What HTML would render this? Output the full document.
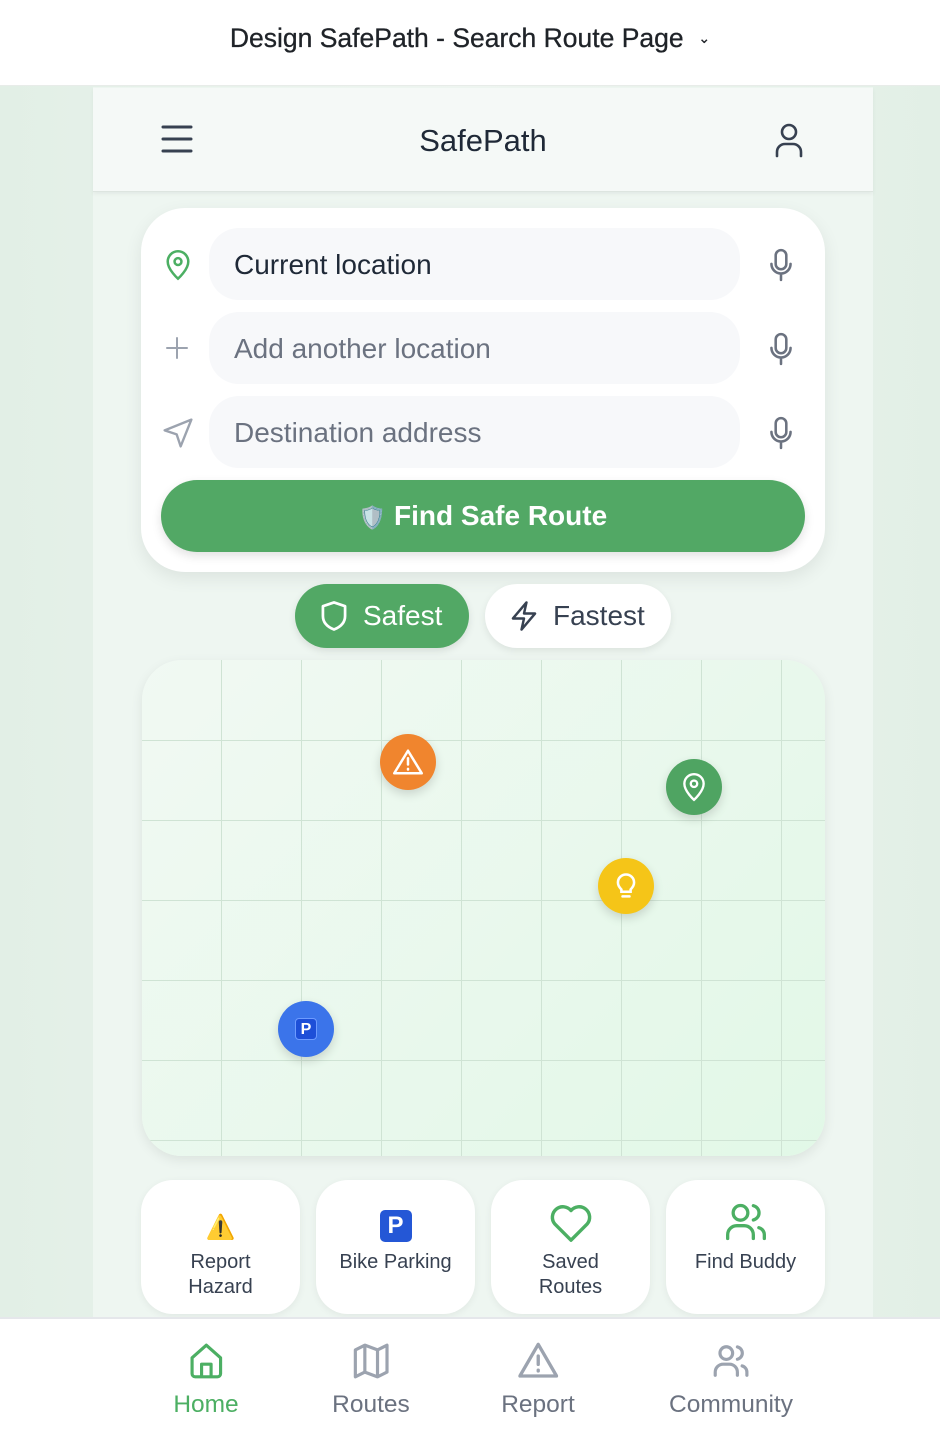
<!DOCTYPE html>
<html><head><meta charset="utf-8"><style>
*{box-sizing:border-box;margin:0;padding:0}
body{width:940px;height:1434px;overflow:hidden;font-family:"Liberation Sans",Helvetica,Arial,sans-serif;background:linear-gradient(90deg,#e2efe6,#eef5f0 50%,#e2efe6);position:relative}
.top{position:absolute;left:0;top:0;width:940px;height:86px;background:#fff;border-bottom:1px solid #e8ece9;text-align:center;font-size:26.5px;color:#1f2328;line-height:76px;-webkit-text-stroke:0.3px #1f2328}
.app{position:absolute;left:93px;top:87px;width:780px;height:1240px;background:#eef6f1}
.hdr{position:absolute;left:93px;top:88px;width:780px;height:104px;background:#f5f9f7;border-bottom:1px solid #dde5e0;box-shadow:0 2px 4px rgba(0,0,0,.05)}
.hdr .t{position:absolute;left:0;width:100%;text-align:center;top:35px;font-size:31px;color:#1f2937}
.card{position:absolute;left:141px;top:208px;width:684px;height:364px;background:#fff;border-radius:44px;box-shadow:0 6px 18px rgba(0,0,0,.08)}
.inp{position:absolute;left:209px;width:531px;height:72px;background:#f7f8fa;border-radius:30px;font-size:28px;line-height:74px;padding-left:25px;color:#6b7280}
.btn{position:absolute;left:161px;top:480px;width:644px;height:72px;background:#52a865;border-radius:36px;color:#fff;font-size:28px;font-weight:bold;text-align:center;line-height:72px;box-shadow:0 4px 10px rgba(0,0,0,.12)}
.pill{position:absolute;top:584px;height:64px;border-radius:32px;font-size:28px;line-height:64px}
.map{position:absolute;left:142px;top:660px;width:683px;height:496px;border-radius:40px;overflow:hidden;background:linear-gradient(135deg,#f1f9f3,#e2f8e7);box-shadow:0 4px 12px rgba(0,0,0,.08)}
.mk{position:absolute;width:56px;height:56px;border-radius:50%;box-shadow:0 4px 10px rgba(0,0,0,.15);display:flex;align-items:center;justify-content:center}
.tile{position:absolute;top:1180px;width:159px;height:134px;background:#fff;border-radius:32px;box-shadow:0 2px 8px rgba(0,0,0,.06);text-align:center;font-size:20px;color:#374151;line-height:25px}
.tile .ic{height:70px;display:flex;align-items:flex-end;justify-content:center;padding-bottom:8px}
.nav{position:absolute;left:0;top:1317px;width:940px;height:117px;background:#fff;border-top:2px solid #e5e7eb}
.ni{position:absolute;top:22px;text-align:center;font-size:24.5px;color:#6b7280;transform:translateX(-50%)}
.ni div{height:50px}
</style></head><body>
<div class="top">Design SafePath - Search Route Page &nbsp;<span style="font-size:14px;position:relative;top:-4px">&#8964;</span></div>
<div class="app"></div>
<div class="hdr">
 <svg style="position:absolute;left:68px;top:36px" width="32" height="30" viewBox="0 0 32 30" stroke="#374151" stroke-width="3" stroke-linecap="round"><path d="M2 3h28M2 15h28M2 27h28"/></svg>
 <div class="t">SafePath</div>
 <svg style="position:absolute;left:680px;top:34px" width="32" height="36" viewBox="0 0 32 36" fill="none" stroke="#374151" stroke-width="2.6" stroke-linecap="round"><circle cx="16" cy="10" r="7"/><path d="M4 34v-4a8 8 0 0 1 8-8h8a8 8 0 0 1 8 8v4"/></svg>
</div>
<div class="card"></div>
<svg style="position:absolute;left:164px;top:249px" width="28" height="32" viewBox="0 0 24 28" fill="none" stroke="#4caf63" stroke-width="2.2"><path d="M12 26s9-8 9-15a9 9 0 0 0-18 0c0 7 9 15 9 15z"/><circle cx="12" cy="11" r="3"/></svg>
<svg style="position:absolute;left:165px;top:336px" width="24" height="24" viewBox="0 0 24 24" stroke="#9ca3af" stroke-width="2" stroke-linecap="round"><path d="M12 2v20M2 12h20"/></svg>
<svg style="position:absolute;left:162px;top:417px" width="32" height="32" viewBox="0 0 24 24" fill="none" stroke="#9ca3af" stroke-width="1.8" stroke-linejoin="round"><path d="M22 2L2 10l9 3 3 9z"/></svg>
<div class="inp" style="top:228px;color:#1f2937">Current location</div>
<div class="inp" style="top:312px">Add another location</div>
<div class="inp" style="top:396px">Destination address</div>
<svg style="position:absolute;left:768px;top:248px" width="26" height="34" viewBox="0 0 24 32" fill="none" stroke="#6b7280" stroke-width="2.4" stroke-linecap="round"><rect x="7" y="2" width="10" height="18" rx="5"/><path d="M3 15a9 9 0 0 0 18 0M12 24v6"/></svg>
<svg style="position:absolute;left:768px;top:332px" width="26" height="34" viewBox="0 0 24 32" fill="none" stroke="#6b7280" stroke-width="2.4" stroke-linecap="round"><rect x="7" y="2" width="10" height="18" rx="5"/><path d="M3 15a9 9 0 0 0 18 0M12 24v6"/></svg>
<svg style="position:absolute;left:768px;top:416px" width="26" height="34" viewBox="0 0 24 32" fill="none" stroke="#6b7280" stroke-width="2.4" stroke-linecap="round"><rect x="7" y="2" width="10" height="18" rx="5"/><path d="M3 15a9 9 0 0 0 18 0M12 24v6"/></svg>
<div class="btn"><span style="font-size:22px">🛡️</span> Find Safe Route</div>
<div class="pill" style="left:295px;width:174px;background:#52a865;color:#fff;padding-left:68px;box-shadow:0 3px 8px rgba(0,0,0,.1)">Safest
 <svg style="position:absolute;left:24px;top:16px" width="30" height="32" viewBox="0 0 24 26" fill="none" stroke="#fff" stroke-width="2.2" stroke-linejoin="round"><path d="M12 2l9 3v8c0 6-4 9-9 11-5-2-9-5-9-11V5z"/></svg></div>
<div class="pill" style="left:485px;width:186px;background:#fff;color:#374151;padding-left:68px;box-shadow:0 3px 8px rgba(0,0,0,.08)">Fastest
 <svg style="position:absolute;left:24px;top:16px" width="30" height="32" viewBox="0 0 24 26" fill="none" stroke="#374151" stroke-width="2" stroke-linejoin="round"><path d="M14 2L3 15h9l-2 9 11-13h-9z"/></svg></div>
<div class="map">
 <svg width="683" height="496" style="position:absolute;left:0;top:0" stroke="#cfe3d4" stroke-width="1">
  <path d="M79.5 0v496M159.5 0v496M239.5 0v496M319.5 0v496M399.5 0v496M479.5 0v496M559.5 0v496M639.5 0v496M0 80.5h683M0 160.5h683M0 240.5h683M0 320.5h683M0 400.5h683M0 480.5h683"/>
 </svg>
 <div class="mk" style="left:238px;top:74px;background:#f0852e"><svg width="30" height="28" viewBox="0 0 24 22" fill="none" stroke="#fff" stroke-width="2" stroke-linecap="round" stroke-linejoin="round"><path d="M12 2L1 20h22z"/><path d="M12 8v5M12 16.5v.5"/></svg></div>
 <div class="mk" style="left:524px;top:99px;background:#4fa462"><svg width="26" height="30" viewBox="0 0 24 28" fill="none" stroke="#fff" stroke-width="2.2"><path d="M12 26s9-8 9-15a9 9 0 0 0-18 0c0 7 9 15 9 15z"/><circle cx="12" cy="11" r="3"/></svg></div>
 <div class="mk" style="left:456px;top:198px;background:#f5c518"><svg width="24" height="30" viewBox="0 0 20 26" fill="none" stroke="#fff" stroke-width="2.2" stroke-linecap="round"><path d="M6 16c-2-2-3-4-3-6a7 7 0 0 1 14 0c0 2-1 4-3 6v2H6zM7 22h6"/></svg></div>
 <div class="mk" style="left:136px;top:341px;background:#3b74ea"><div style="width:22px;height:22px;background:#1d4fd8;border-radius:4px;color:#fff;font-weight:bold;font-size:16px;line-height:22px;text-align:center;border:1px solid #6d9bff">P</div></div>
</div>
<div class="tile" style="left:141px"><div class="ic" style="padding-bottom:10px"><span style="font-size:24px;color:#f5c518">⚠️</span></div>Report<br>Hazard</div>
<div class="tile" style="left:316px"><div class="ic"><div style="width:32px;height:32px;background:#2457d6;border-radius:5px;color:#fff;font-weight:bold;font-size:24px;line-height:32px">P</div></div>Bike Parking</div>
<div class="tile" style="left:491px"><div class="ic" style="padding-bottom:6px"><svg width="46" height="42" viewBox="0 0 24 22" fill="none" stroke="#4caf63" stroke-width="1.8" stroke-linejoin="round"><path d="M12 20L3.5 11.5A5 5 0 0 1 12 4.5a5 5 0 0 1 8.5 7z"/></svg></div>Saved<br>Routes</div>
<div class="tile" style="left:666px"><div class="ic" style="padding-bottom:6px"><svg width="46" height="44" viewBox="0 0 24 24" fill="none" stroke="#4caf63" stroke-width="1.8" stroke-linecap="round"><circle cx="9" cy="7" r="4"/><path d="M2 21v-2a5 5 0 0 1 5-5h4a5 5 0 0 1 5 5v2M16 3.1a4 4 0 0 1 0 7.8M22 21v-2a4 4 0 0 0-3-3.9"/></svg></div>Find Buddy</div>
<div class="nav">
 <div class="ni" style="left:206px;color:#4caf63"><div><svg width="38" height="40" viewBox="0 0 24 24" fill="none" stroke="#4caf63" stroke-width="2" stroke-linejoin="round"><path d="M3 10l9-8 9 8v10a2 2 0 0 1-2 2H5a2 2 0 0 1-2-2z"/><path d="M9 22v-8h6v8"/></svg></div>Home</div>
 <div class="ni" style="left:371px"><div><svg width="38" height="40" viewBox="0 0 24 24" fill="none" stroke="#9ca3af" stroke-width="2" stroke-linejoin="round"><path d="M2 5l6-3 8 3 6-3v17l-6 3-8-3-6 3zM8 2v17M16 5v17"/></svg></div>Routes</div>
 <div class="ni" style="left:538px"><div><svg width="40" height="40" viewBox="0 0 24 24" fill="none" stroke="#9ca3af" stroke-width="2" stroke-linecap="round" stroke-linejoin="round"><path d="M12 2L1 21h22z"/><path d="M12 9v5M12 17.5v.5"/></svg></div>Report</div>
 <div class="ni" style="left:731px"><div><svg width="38" height="40" viewBox="0 0 24 24" fill="none" stroke="#9ca3af" stroke-width="2" stroke-linecap="round"><circle cx="9" cy="7" r="4"/><path d="M2 21v-2a5 5 0 0 1 5-5h4a5 5 0 0 1 5 5v2M16 3.1a4 4 0 0 1 0 7.8M22 21v-2a4 4 0 0 0-3-3.9"/></svg></div>Community</div>
</div>
</body></html>
